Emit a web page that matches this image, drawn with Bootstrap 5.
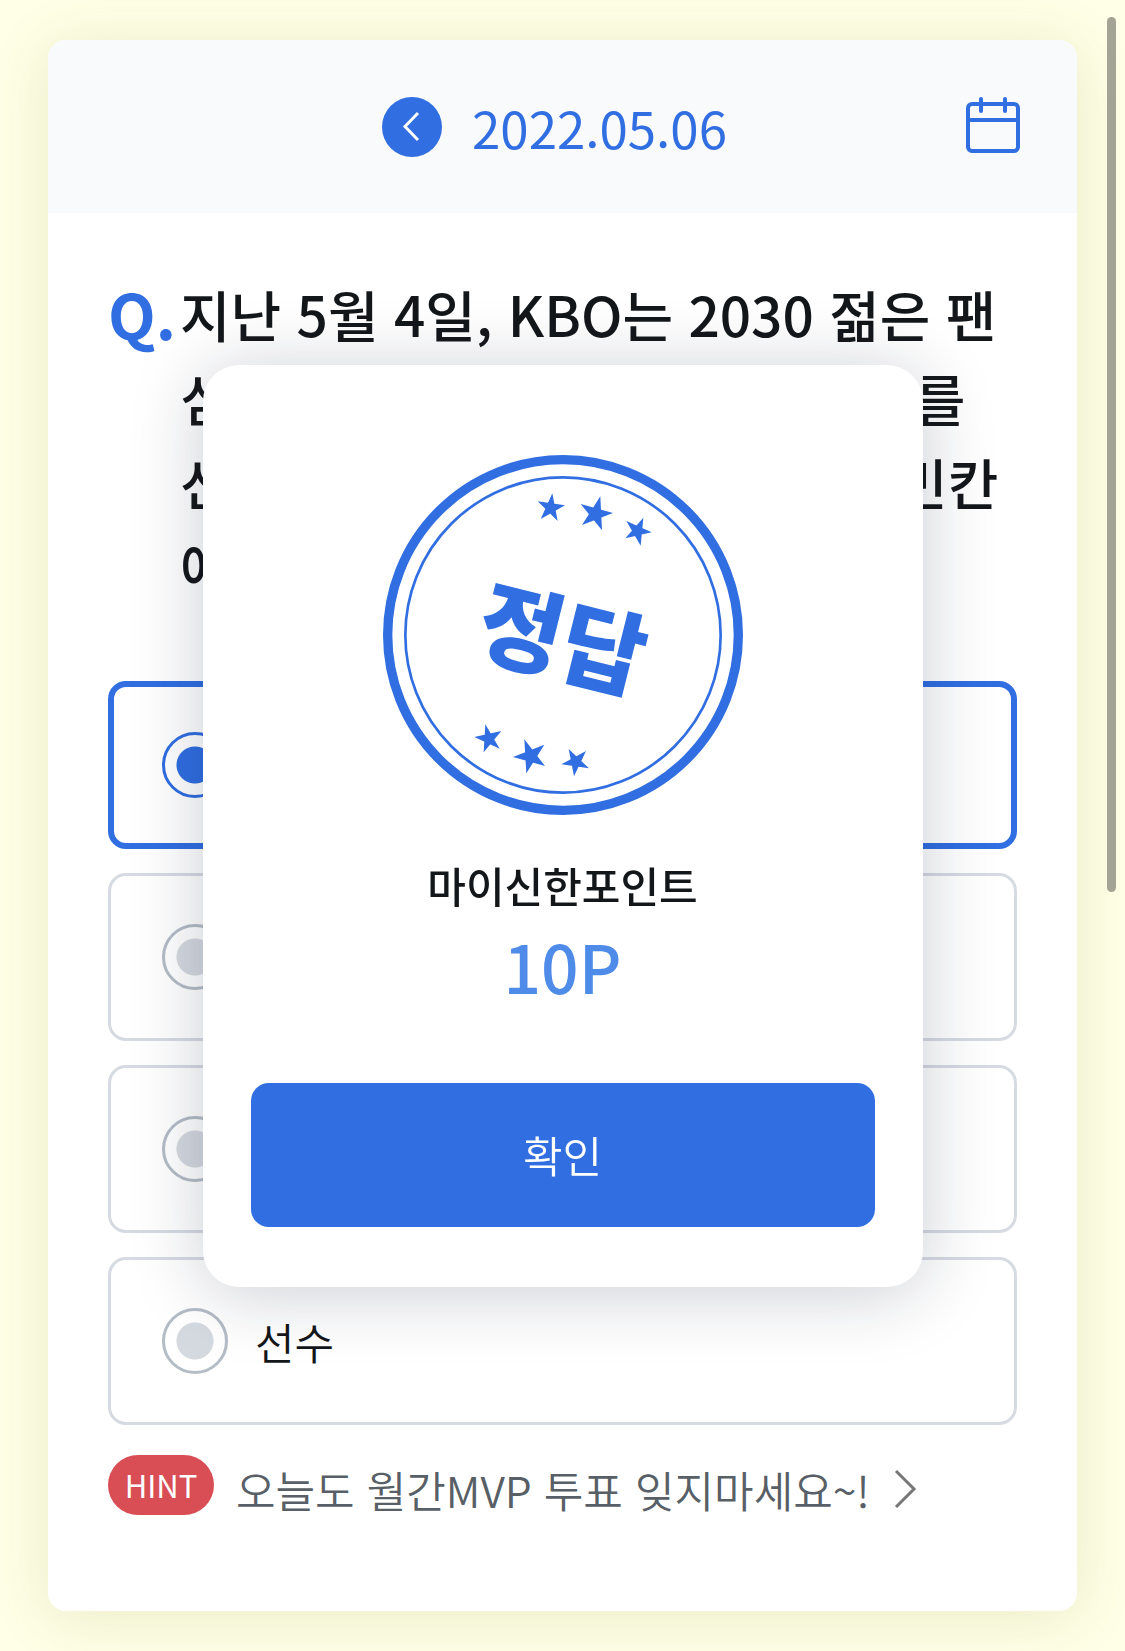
<!DOCTYPE html>
<html lang="ko">
<head>
<meta charset="utf-8">
<meta name="viewport" content="width=device-width, initial-scale=1">
<title>오늘의 퀴즈</title>
<link rel="stylesheet" href="https://cdn.jsdelivr.net/npm/bootstrap@5.3.0/dist/css/bootstrap.min.css">
<style>
  :root { --brand: #306ee1; --ink: #14171a; --line: #d6dae1; }
  body {
    background: #feffe6;
    color: var(--ink);
    font-family: "Noto Sans CJK KR", sans-serif;
    padding: 40px 48px;
  }
  .quiz-card {
    border-radius: 18px;
    box-shadow: 0 6px 60px rgba(120, 110, 20, .14);
  }
  .quiz-head {
    background: #f9fafc;
    height: 173px;
    padding: 0 57px;
    border-radius: 18px 18px 0 0;
    color: var(--brand);
  }
  .date-nav { gap: 30px; padding-right: 16px; }
  .quiz-date { font-size: 51px; line-height: 60px; }
  .prev-btn { width: 60px; height: 60px; background: var(--brand); }
  .side-slot { width: 54px; }
  .quiz-body { padding: 58px 60px 88px; }
  .question { font-size: 55px; line-height: 84px; font-weight: 500; }
  .q-mark { width: 72px; font-size: 62px; font-weight: 700; color: var(--brand); }
  .choices { gap: 24px; margin-top: 74px; }
  .choice {
    height: 168px;
    border: 3px solid var(--line);
    border-radius: 18px;
    padding: 0 51px;
    gap: 27px;
    font-size: 43px;
    font-weight: 350;
  }
  .choice:has(:checked) { border: 6px solid var(--brand); padding: 0 48px; }
  .choice input {
    appearance: none;
    flex: none;
    width: 66px;
    height: 66px;
    margin: 0;
    border: 3px solid #b4bcc6;
    border-radius: 50%;
    background: radial-gradient(circle, #d5d9e0 0 18px, transparent 19px);
  }
  .choice input:checked {
    border-color: var(--brand);
    background: radial-gradient(circle, var(--brand) 0 18px, transparent 19px);
  }
  .hint-row { margin-top: 30px; gap: 22px; }
  .hint-tag {
    width: 106px;
    height: 60px;
    background: #d94e55;
    font-size: 31px;
    font-weight: 400;
  }
  .hint-link { color: #585f66; font-size: 43px; line-height: 68px; font-weight: 350; gap: 24px; }
  .popup-wrap { z-index: 10; pointer-events: none; }
  .popup {
    width: 64%;
    pointer-events: auto;
    padding: 90px 48px 60px;
    border-radius: 36px;
    box-shadow: 0 6px 72px rgba(18, 26, 52, .22);
  }
  .stamp { width: 360px; height: 360px; }
  .popup-title { font-size: 42px; line-height: 60px; font-weight: 500; margin: 40px 0 8px; }
  .popup-point { font-size: 66px; line-height: 84px; font-weight: 500; color: #4f8be8; }
  .popup-ok {
    height: 144px;
    margin-top: 76px;
    border-radius: 18px;
    background: var(--brand);
    font-size: 43px;
    font-weight: 350;
  }
  .scroll-thumb {
    top: 17px;
    right: 9px;
    width: 9px;
    height: 53vh;
    border-radius: 5px;
    background: #a3a494;
  }
</style>
<script src="https://cdn.jsdelivr.net/npm/bootstrap@5.3.0/dist/js/bootstrap.bundle.min.js"></script>
</head>
<body>
<main class="quiz-card bg-white">
  <header class="quiz-head d-flex align-items-center justify-content-between">
    <div class="side-slot"></div>
    <div class="date-nav d-flex align-items-center">
      <button type="button" class="prev-btn btn rounded-circle border-0 p-0 d-flex" aria-label="이전 날짜">
        <svg width="60" height="60" viewBox="0 0 60 60" fill="none" stroke="#fff" stroke-width="3"><path d="M36 16 23 29.500 36 43"/></svg>
      </button>
      <time class="quiz-date" datetime="2022-05-06">2022.05.06</time>
    </div>
    <button type="button" class="side-slot btn border-0 p-0 d-flex" aria-label="달력">
      <svg width="54" height="60" viewBox="0 0 54 60" fill="none" stroke="#306ee1" stroke-width="4"><rect x="2" y="7" width="50" height="47" rx="4"/><path d="M2 23h50"/><path d="M15 2v12M39 2v12" stroke-linecap="round"/></svg>
    </button>
  </header>
  <div class="quiz-body">
    <div class="question d-flex">
      <div class="q-mark flex-shrink-0">Q.</div>
      <div class="text-nowrap">지난 5월 4일, KBO는 2030 젊은 팬<br>심을 잡기 위하여 야구 홍보 대사를<br>선정했다. 이 때, 뽑힌 주인공은 빈칸<br>에 들어갈 말은?</div>
    </div>
    <form class="choices d-flex flex-column">
      <label class="choice d-flex align-items-center"><input type="radio" name="answer" checked><span>감독</span></label>
      <label class="choice d-flex align-items-center"><input type="radio" name="answer"><span>코치</span></label>
      <label class="choice d-flex align-items-center"><input type="radio" name="answer"><span>심판</span></label>
      <label class="choice d-flex align-items-center"><input type="radio" name="answer"><span>선수</span></label>
    </form>
    <div class="hint-row d-flex align-items-start">
      <span class="hint-tag rounded-pill text-white d-flex align-items-center justify-content-center">HINT</span>
      <a href="#" class="hint-link d-flex align-items-center text-decoration-none text-nowrap">오늘도 월간MVP 투표 잊지마세요~!
        <svg width="24" height="40" viewBox="0 0 24 40" fill="none" stroke="#777" stroke-width="3"><path d="M2 2l18 18L2 38"/></svg>
      </a>
    </div>
  </div>
</main>

<div class="popup-wrap position-fixed top-0 start-0 w-100 h-100 d-flex align-items-center justify-content-center">
  <section class="popup bg-white d-flex flex-column align-items-center" role="dialog" aria-label="정답">
    <svg class="stamp" viewBox="39 42 1080 1080" fill="#306ee1">
      <g fill="none" stroke="#306ee1"><circle cx="579" cy="582" r="526" stroke-width="28"/><circle cx="579" cy="582" r="473" stroke-width="8"/></g>
      <path d="M547 157 563 240 503 181 585 193 512 234Z"/>
      <path d="M691 166 696 268 632 189 729 216 636 252Z"/>
      <path d="M820 230 812 314 769 240 845 274 766 292Z"/>
      <path d="M346 850 389 923 313 888 394 870 341 934Z"/>
      <path d="M463 895 525 975 429 948 523 911 469 997Z"/>
      <path d="M596 924 657 982 574 970 648 930 612 1006Z"/>
      <text x="576" y="700" transform="rotate(14 584 600)" text-anchor="middle" font-size="276" font-weight="900">정답</text>
    </svg>
    <h2 class="popup-title">마이신한포인트</h2>
    <div class="popup-point">10P</div>
    <button type="button" class="popup-ok btn w-100 border-0 text-white">확인</button>
  </section>
</div>
<div class="scroll-thumb position-fixed"></div>
</body>
</html>
